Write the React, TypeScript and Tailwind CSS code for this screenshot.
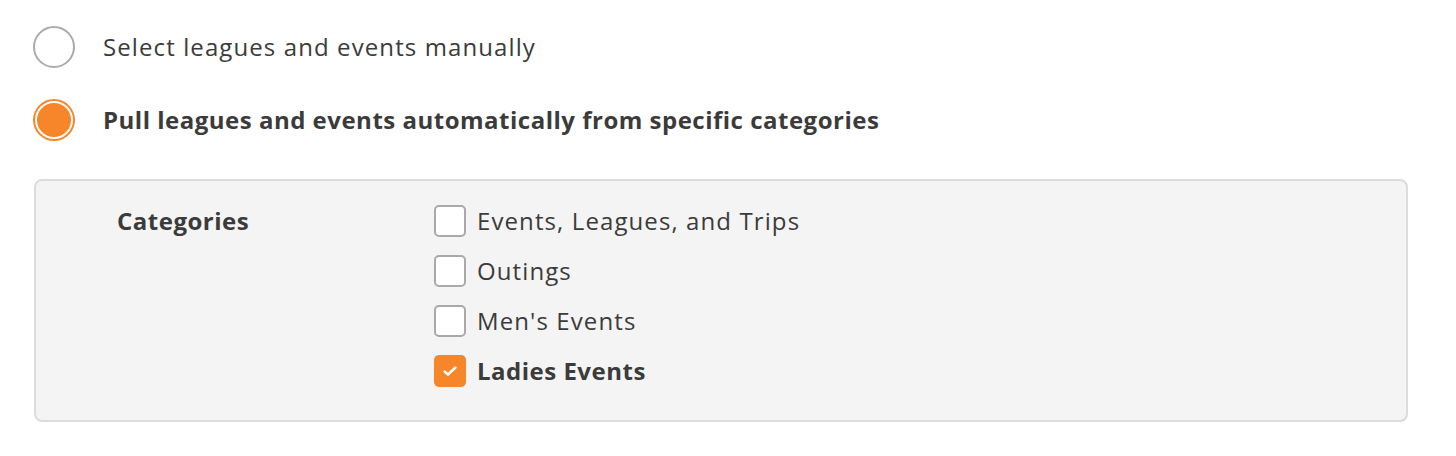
import { useState } from 'react';

const CATEGORIES = ['Events, Leagues, and Trips', 'Outings', "Men's Events", 'Ladies Events'];

export default function App() {
  const [mode, setMode] = useState<'manual' | 'auto'>('auto');
  const [checked, setChecked] = useState<string[]>(['Ladies Events']);

  const toggle = (c: string) =>
    setChecked(list => (list.includes(c) ? list.filter(x => x !== c) : [...list, c]));

  const font = { fontFamily: '"Open Sans", Lato, sans-serif' };
  const txt = (bold: boolean) =>
    bold ? 'text-[24px] font-bold tracking-[0.5px]' : 'text-[24px] tracking-[1.1px]';

  return (
    <div className="w-[1456px] h-[456px] bg-white text-[#3b3b3b] pl-[33px] pt-[26px]" style={font}>
      {/* Radio options */}
      <div className="flex flex-col gap-[31px]">
        <button onClick={() => setMode('manual')} className="flex items-center gap-[28px] text-left">
          {mode === 'manual' ? (
            <span className="w-[42px] h-[42px] rounded-full bg-[#f7852a] flex items-center justify-center">
              <span className="w-[38px] h-[38px] rounded-full bg-[#f7852a] border-2 border-white" />
            </span>
          ) : (
            <span className="w-[42px] h-[42px] rounded-full bg-white border-2 border-[#ababab]" />
          )}
          <span className={txt(mode === 'manual')}>Select leagues and events manually</span>
        </button>
        <button onClick={() => setMode('auto')} className="flex items-center gap-[28px] text-left">
          {mode === 'auto' ? (
            <span className="w-[42px] h-[42px] rounded-full bg-[#f7852a] flex items-center justify-center">
              <span className="w-[38px] h-[38px] rounded-full bg-[#f7852a] border-2 border-white" />
            </span>
          ) : (
            <span className="w-[42px] h-[42px] rounded-full bg-white border-2 border-[#ababab]" />
          )}
          <span className={txt(mode === 'auto')}>
            Pull leagues and events automatically from specific categories
          </span>
        </button>
      </div>

      {/* Categories panel */}
      <div className="mt-[38px] ml-px w-[1374px] h-[243px] rounded-[8px] border-2 border-[#dcdcdc] bg-[#f4f4f4] flex pl-[81px] pt-[22px]">
        <div className={`w-[317px] leading-[36px] ${txt(true)}`}>Categories</div>
        <div className="flex flex-col gap-[14px]">
          {CATEGORIES.map(c => {
            const on = checked.includes(c);
            return (
              <label key={c} className="flex items-center gap-[11px] h-[36px] cursor-pointer" onClick={() => toggle(c)}>
                {on ? (
                  <span className="w-[32px] h-[32px] rounded-[5px] bg-[#f7852a] flex items-center justify-center">
                    <svg width="16" height="12" viewBox="0 0 16 12" fill="none">
                      <path d="M2.5 6.5 L6 9.5 L13.5 2.5" stroke="white" strokeWidth="2.4" strokeLinecap="round" strokeLinejoin="round" />
                    </svg>
                  </span>
                ) : (
                  <span className="w-[32px] h-[32px] rounded-[5px] bg-white border-2 border-[#a9a9a9]" />
                )}
                <span className={txt(on)}>{c}</span>
              </label>
            );
          })}
        </div>
      </div>
    </div>
  );
}
